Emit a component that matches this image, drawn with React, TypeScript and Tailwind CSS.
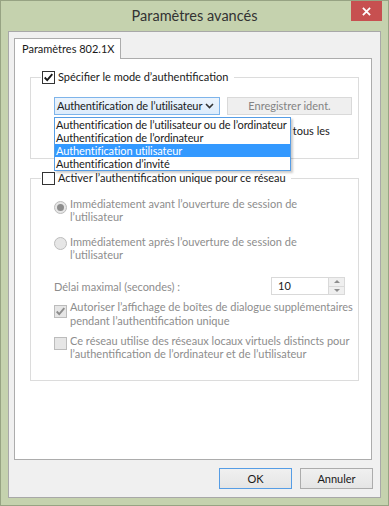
import React from "react";

const FONT = { fontFamily: 'Lato, "Noto Sans", sans-serif' };

const Check = ({ color = "#1a1a1a" }: { color?: string }) => (
  <svg viewBox="0 0 13 13" className="w-[11px] h-[11px]">
    <path d="M2 6.5 L5 9.5 L11 2.5" fill="none" stroke={color} strokeWidth="2.2" />
  </svg>
);

const CheckBox = ({ checked, disabled }: { checked?: boolean; disabled?: boolean }) => (
  <span
    className={`flex-shrink-0 w-[13px] h-[13px] border flex items-center justify-center ${
      disabled ? "border-[#bcbcbc] bg-[#e6e6e6]" : "border-[#333333] bg-white"
    }`}
  >
    {checked && <Check color={disabled ? "#8d8d8d" : "#1a1a1a"} />}
  </span>
);

const Radio = ({ selected }: { selected?: boolean }) => (
  <span className="flex-shrink-0 w-[13px] h-[13px] rounded-full border border-[#bcbcbc] bg-[#e6e6e6] flex items-center justify-center">
    {selected && <span className="w-[7px] h-[7px] rounded-full bg-[#8d8d8d]" />}
  </span>
);

const options = [
  "Authentification de l’utilisateur ou de l’ordinateur",
  "Authentification de l’ordinateur",
  "Authentification utilisateur",
  "Authentification d’invité",
];

export default function App() {
  return (
    <div
      className="w-[389px] h-[506px] border border-[#97a383] bg-[#c5d2ae] flex flex-col text-[11px] text-[#1a1a1a] overflow-hidden"
      style={FONT}
    >
      {/* Title bar */}
      <div className="relative h-[30px] flex-shrink-0 flex items-center justify-center">
        <span className="text-[14.5px] text-[#333333] mt-[-1px]">Paramètres avancés</span>
        <div className="absolute right-[6px] top-0 w-[31px] h-[20px] bg-[#c75050] flex items-center justify-center">
          <svg viewBox="0 0 10 10" className="w-[9px] h-[9px]">
            <path d="M1 1 L9 9 M9 1 L1 9" stroke="white" strokeWidth="2" />
          </svg>
        </div>
      </div>

      {/* Client area */}
      <div className="mx-[7px] h-[467px] flex-shrink-0 border border-[#a8a8a8] bg-[#f0f0f0] flex flex-col pl-[5px] pr-[7px] pt-[6px]">
        {/* Tab header */}
        <div className="relative z-10 -mb-px w-[107px] h-[21px] border border-b-0 border-[#acacac] bg-white pl-[7px] pt-[2px] leading-[16px] whitespace-nowrap">
          Paramètres 802.1X
        </div>

        {/* Tab panel */}
        <div className="w-[358px] h-[402px] border border-[#acacac] bg-white flex flex-col pl-[15px]">
          {/* Group 1 */}
          <fieldset className="mt-[11px] w-[329px] border border-[#dcdcdc] pb-[6px]">
            <legend className="ml-[10px] pl-[1px] pr-[6px] h-[14px] flex items-center gap-[3px] leading-[14px]">
              <CheckBox checked />
              <span>Spécifier le mode d’authentification</span>
            </legend>
            <div className="mt-[13px] pl-[23px] flex gap-[7px]">
              <div className="relative">
                <div className="w-[166px] h-[18px] border border-[#7eb4ea] bg-gradient-to-b from-[#ecf4fc] to-[#dcecfc] flex items-center justify-between pl-[2px] pr-[5px] whitespace-nowrap">
                  <span className="tracking-[-0.1px]">Authentification de l’utilisateur</span>
                  <svg viewBox="0 0 9 6" className="w-[9px] h-[6px]">
                    <path d="M1 1 L4.5 4.5 L8 1" fill="none" stroke="#333" strokeWidth="1.6" />
                  </svg>
                </div>
                {/* Open dropdown list */}
                <div className="absolute left-0 top-[20px] z-20 w-[237px] border border-[#569de5] bg-white shadow-[2px_2px_2px_rgba(0,0,0,0.2)] tracking-[-0.1px]">
                  {options.map((o, i) => (
                    <div
                      key={o}
                      className={`h-[13px] leading-[13px] pl-[1px] whitespace-nowrap ${
                        i === 2 ? "bg-[#3399ff] text-white" : ""
                      }`}
                    >
                      {o}
                    </div>
                  ))}
                </div>
              </div>
              <div className="w-[125px] h-[18px] border border-[#d9d9d9] bg-[#efefef] text-[#838383] flex items-center justify-center">
                Enregistrer ident.
              </div>
            </div>
            <div className="mt-[9px] pl-[23px] flex gap-[3px] items-start leading-[14px] whitespace-nowrap">
              <span className="mt-[1px]">
                <CheckBox />
              </span>
              <span className="pl-[1px]">
                Supprimer les informations d’identification de tous les
                <br />
                utilisateurs
              </span>
            </div>
          </fieldset>

          {/* Group 2 */}
          <fieldset className="mt-[12px] w-[329px] border border-[#dcdcdc] pb-[20px] pl-[23px]">
            <legend className="ml-[-13px] pl-[1px] pr-[5px] h-[14px] flex items-center gap-[3px] leading-[14px]">
              <CheckBox />
              <span>Activer l’authentification unique pour ce réseau</span>
            </legend>
            <div className="text-[#8d8d8d] leading-[13px] whitespace-nowrap">
              <div className="mt-[12px] flex items-start gap-[3px]">
                <span className="mt-[4px]">
                  <Radio selected />
                </span>
                <span>
                  Immédiatement avant l’ouverture de session de
                  <br />
                  l’utilisateur
                </span>
              </div>
              <div className="mt-[12px] flex items-start gap-[3px]">
                <span className="mt-[2px]">
                  <Radio />
                </span>
                <span>
                  Immédiatement après l’ouverture de session de
                  <br />
                  l’utilisateur
                </span>
              </div>
              <div className="mt-[16px] flex items-center justify-between pr-[13px]">
                <span>Délai maximal (secondes) :</span>
                <div className="w-[74px] h-[18px] border border-[#d9d9d9] bg-white flex">
                  <span className="flex-1 pl-[6px] leading-[16px] text-[#1a1a1a]">10</span>
                  <div className="w-[16px] flex flex-col border-l border-[#d9d9d9]">
                    <div className="flex-1 bg-[#efefef] border-b border-[#d9d9d9] flex items-center justify-center">
                      <svg viewBox="0 0 6 3" className="w-[6px] h-[3px]">
                        <path d="M0 3 L3 0 L6 3 Z" fill="#8d8d8d" />
                      </svg>
                    </div>
                    <div className="flex-1 bg-[#efefef] flex items-center justify-center">
                      <svg viewBox="0 0 6 3" className="w-[6px] h-[3px]">
                        <path d="M0 0 L3 3 L6 0 Z" fill="#8d8d8d" />
                      </svg>
                    </div>
                  </div>
                </div>
              </div>
              <div className="mt-[5px] flex items-start gap-[3px] leading-[14px]">
                <span className="mt-[5px]">
                  <CheckBox checked disabled />
                </span>
                <span>
                  Autoriser l’affichage de boîtes de dialogue supplémentaires
                  <br />
                  pendant l’authentification unique
                </span>
              </div>
              <div className="mt-[6px] flex items-start gap-[3px]">
                <span className="mt-[3px]">
                  <CheckBox disabled />
                </span>
                <span>
                  Ce réseau utilise des réseaux locaux virtuels distincts pour
                  <br />
                  l’authentification de l’ordinateur et de l’utilisateur
                </span>
              </div>
            </div>
          </fieldset>
        </div>

        {/* Buttons */}
        <div className="mt-[8px] flex justify-end gap-[8px]">
          <button className="w-[73px] h-[21px] border border-[#569de5] bg-gradient-to-b from-[#f0f0f0] to-[#e5e5e5] leading-[18px]">
            OK
          </button>
          <button className="w-[73px] h-[21px] border border-[#acacac] bg-gradient-to-b from-[#f0f0f0] to-[#e5e5e5] leading-[18px]">
            Annuler
          </button>
        </div>
      </div>
    </div>
  );
}
